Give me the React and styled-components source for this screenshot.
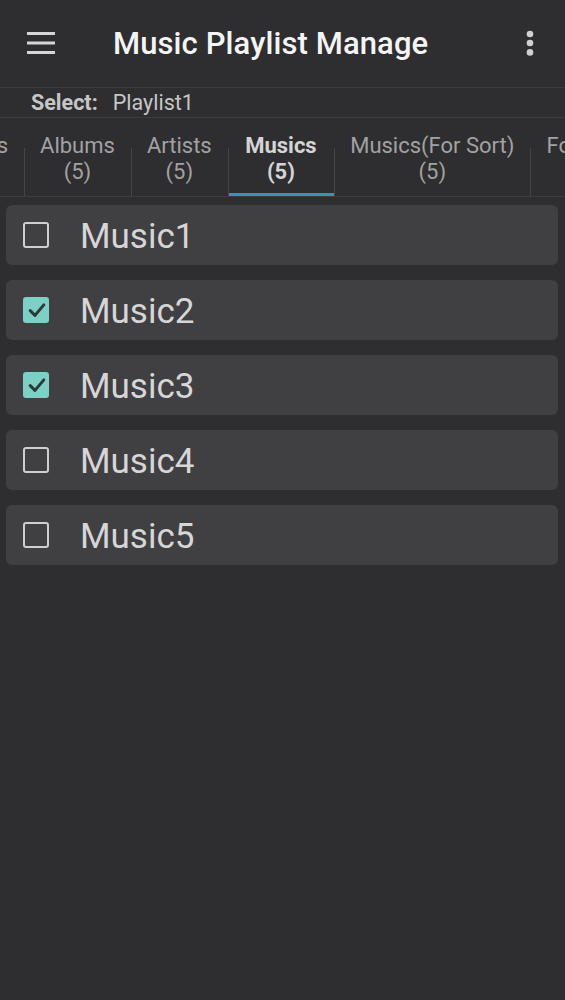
import { useEffect, useRef } from "react";
import styled, { createGlobalStyle } from "styled-components";

const GlobalStyle = createGlobalStyle`
  html, body {
    margin: 0;
    padding: 0;
    background: #2e2d30;
  }
  body {
    font-family: Roboto, "Noto Sans", "Liberation Sans", sans-serif;
  }
`;

const tabs = [
  { name: "Playlists", count: 1 },
  { name: "Albums", count: 5 },
  { name: "Artists", count: 5 },
  { name: "Musics", count: 5, active: true },
  { name: "Musics(For Sort)", count: 5 },
  { name: "Folders", count: 2 },
];

const musics = [
  { title: "Music1", checked: false },
  { title: "Music2", checked: true },
  { title: "Music3", checked: true },
  { title: "Music4", checked: false },
  { title: "Music5", checked: false },
];

const App = () => {
  const stripRef = useRef(null);
  const albumsRef = useRef(null);

  useEffect(() => {
    // the tab strip is scrolled so the Albums divider sits near the left edge
    if (stripRef.current && albumsRef.current) {
      stripRef.current.scrollLeft = albumsRef.current.offsetLeft - 24;
    }
  }, []);

  return (
    <Page>
      <GlobalStyle />
      <TopBar>
        <IconButton aria-label="menu">
          <svg width="28" height="22" viewBox="0 0 28 22">
            <rect x="0" y="0" width="28" height="3" fill="#d6d6d6" />
            <rect x="0" y="9.5" width="28" height="3" fill="#d6d6d6" />
            <rect x="0" y="19" width="28" height="3" fill="#d6d6d6" />
          </svg>
        </IconButton>
        <Title>Music Playlist Manage</Title>
        <MoreButton aria-label="more">
          <svg width="8" height="26" viewBox="0 0 8 26">
            <circle cx="4" cy="4" r="3.3" fill="#d0d0d0" />
            <circle cx="4" cy="13" r="3.3" fill="#d0d0d0" />
            <circle cx="4" cy="22.4" r="3.3" fill="#d0d0d0" />
          </svg>
        </MoreButton>
      </TopBar>

      <SelectRow>
        <SelectLabel>Select:</SelectLabel>
        <SelectValue>Playlist1</SelectValue>
      </SelectRow>

      <TabStrip ref={stripRef}>
        {tabs.map((tab, index) => (
          <Tab
            key={tab.name}
            ref={tab.name === "Albums" ? albumsRef : null}
            $active={tab.active}
            $first={index === 0}
          >
            <span>{tab.name}</span>
            <span>({tab.count})</span>
          </Tab>
        ))}
      </TabStrip>

      <List>
        {musics.map((music) => (
          <Card key={music.title}>
            <CheckBox $checked={music.checked}>
              {music.checked && (
                <svg width="26" height="26" viewBox="0 0 26 26">
                  <path
                    d="M7.2 13.6 L12 18.4 L20.8 7.9"
                    fill="none"
                    stroke="#2c3a3c"
                    strokeWidth="3"
                    strokeLinecap="round"
                    strokeLinejoin="round"
                  />
                </svg>
              )}
            </CheckBox>
            <MusicTitle>{music.title}</MusicTitle>
          </Card>
        ))}
      </List>
    </Page>
  );
};

const Page = styled.div`
  width: 100%;
  min-height: 100vh;
  background: #2e2d30;
  display: flex;
  flex-direction: column;
`;

const TopBar = styled.header`
  height: 88px;
  display: flex;
  align-items: center;
  padding: 0 31px 0 27px;
  border-bottom: 1px solid #3c3b3f;
  box-sizing: border-box;
`;

const IconButton = styled.div`
  width: 28px;
  height: 22px;
  display: flex;
  margin-top: -1px;
`;

const Title = styled.h1`
  margin: 0 0 0 58px;
  flex: 1;
  font-size: 31px;
  font-weight: 500;
  color: #f4f4f4;
  letter-spacing: 0.1px;
  white-space: nowrap;
`;

const MoreButton = styled.div`
  width: 8px;
  height: 26px;
  display: flex;
  margin-top: -1px;
`;

const SelectRow = styled.div`
  height: 30px;
  display: flex;
  align-items: center;
  padding-left: 31px;
  gap: 15px;
  border-bottom: 1px solid #3c3b3f;
  box-sizing: border-box;
  font-size: 21.5px;
  color: #c6c6c6;
`;

const SelectLabel = styled.span`
  font-weight: 700;
`;

const SelectValue = styled.span`
  font-weight: 400;
`;

const TabStrip = styled.nav`
  height: 79px;
  display: flex;
  overflow: hidden;
  border-bottom: 1px solid #3c3b3f;
  box-sizing: border-box;
`;

const Tab = styled.div`
  flex: none;
  position: relative;
  display: flex;
  flex-direction: column;
  align-items: center;
  justify-content: center;
  padding: 6px ${(p) => (p.$active ? "17.5px" : "16px")} 0;
  font-size: 22px;
  line-height: 26px;
  font-weight: ${(p) => (p.$active ? 700 : 400)};
  color: ${(p) => (p.$active ? "#d4d4d4" : "#a2a2a2")};
  border-bottom: 3px solid ${(p) => (p.$active ? "#3a93b6" : "transparent")};
  white-space: nowrap;

  &::before {
    content: "";
    display: ${(p) => (p.$first ? "none" : "block")};
    position: absolute;
    left: 0;
    top: 30px;
    bottom: -3px;
    width: 1px;
    background: #454448;
  }
`;

const List = styled.main`
  display: flex;
  flex-direction: column;
  gap: 15px;
  padding: 8px 7px 0 6px;
`;

const Card = styled.div`
  height: 60px;
  display: flex;
  align-items: center;
  padding-left: 17px;
  background: #403f42;
  border-radius: 6px;
`;

const CheckBox = styled.div`
  width: 26px;
  height: 26px;
  box-sizing: border-box;
  border-radius: 3px;
  flex: none;
  background: ${(p) => (p.$checked ? "#7dd0c5" : "transparent")};
  border: ${(p) => (p.$checked ? "none" : "2.5px solid #cfcfcf")};
  display: flex;
  align-items: center;
  justify-content: center;
`;

const MusicTitle = styled.span`
  margin-left: 31px;
  font-size: 35px;
  color: #d6d6d6;
  margin-top: 3px;
`;

export default App;
